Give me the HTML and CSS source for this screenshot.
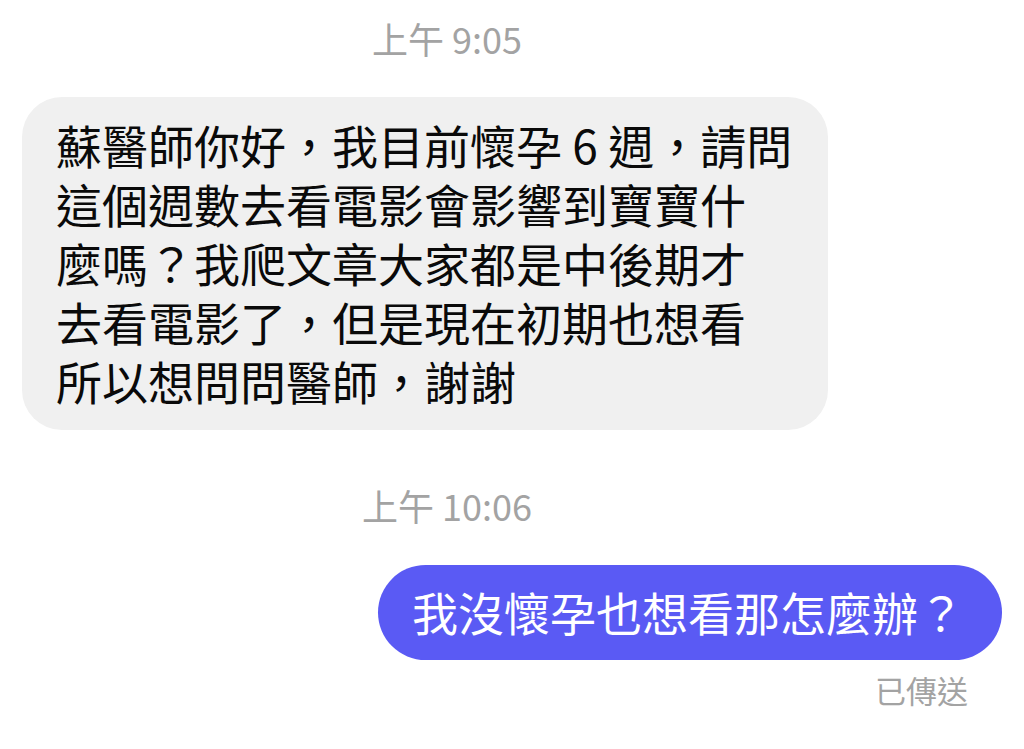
FILE: index.html
```html
<!DOCTYPE html>
<html lang="zh-Hant">
<head>
<meta charset="utf-8">
<link rel="stylesheet" href="styles.css">
</head>
<body>
<div class="chat">
  <div class="time time-first">上午 9:05</div>
  <div class="row row-in">
    <div class="bubble bubble-in">蘇醫師你好，我目前懷孕 6 週，請問<br>這個週數去看電影會影響到寶寶什<br>麼嗎？我爬文章大家都是中後期才<br>去看電影了，但是現在初期也想看<br>所以想問問醫師，謝謝</div>
  </div>
  <div class="time time-second">上午 10:06</div>
  <div class="row row-out">
    <div class="bubble bubble-out">我沒懷孕也想看那怎麼辦？</div>
  </div>
  <div class="status">已傳送</div>
</div>
</body>
</html>
```

FILE: styles.css
```css
html, body {
  margin: 0;
  padding: 0;
  background: #ffffff;
}
body {
  width: 1024px;
  height: 749px;
  overflow: hidden;
  font-family: "Noto Sans CJK TC", "Noto Sans", sans-serif;
}
.chat {
  display: flex;
  flex-direction: column;
  padding-top: 18px;
}
.time {
  width: 894px;
  text-align: center;
  font-size: 36px;
  line-height: 40px;
  color: #a3a3a3;
}
.time-second {
  margin-top: 55px;
}
.row {
  display: flex;
}
.row-in {
  justify-content: flex-start;
  padding-left: 22px;
  margin-top: 39px;
}
.row-out {
  justify-content: flex-end;
  padding-right: 22px;
  margin-top: 40px;
}
.bubble {
  font-size: 46px;
  line-height: 59px;
  white-space: nowrap;
}
.bubble-in {
  background: #f0f0f0;
  color: #0a0a0a;
  padding: 18px 36px 20px 34px;
  border-radius: 40px;
}
.bubble-out {
  background: #5a5af4;
  color: #ffffff;
  padding: 17px 38px 19px 34px;
  border-radius: 48px;
}
.status {
  align-self: flex-end;
  margin-right: 56px;
  margin-top: 10px;
  font-size: 31px;
  line-height: 40px;
  color: #a3a3a3;
}
```
